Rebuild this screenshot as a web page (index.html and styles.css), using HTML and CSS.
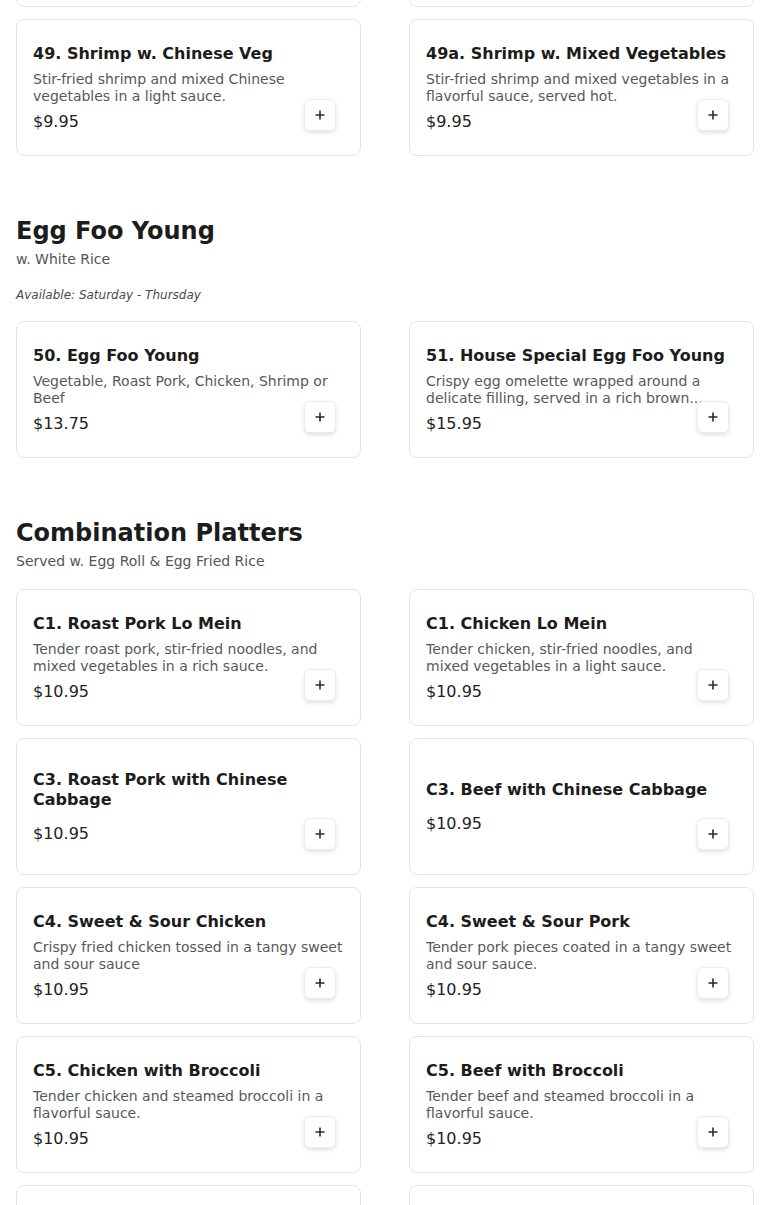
FILE: index.html
```html
<!DOCTYPE html>
<html lang="en">
<head>
<meta charset="utf-8">
<title>Menu</title>
<link rel="stylesheet" href="styles.css">
</head>
<body>
<main class="menu">
  <section class="section section-first">
    <div class="grid">
      <article class="card">
        <div class="info">
          <h3 class="name">48. Shrimp w. Broccoli</h3>
          <p class="desc">Stir-fried shrimp and fresh broccoli in a savory brown sauce.</p>
          <p class="price">$9.95</p>
        </div>
        <button class="add" aria-label="Add"><svg viewBox="0 0 10 10" width="10" height="10"><path d="M5 0.5V9.5M0.5 5H9.5" stroke="#2a2a2a" stroke-width="1.6" fill="none"/></svg></button>
      </article>
      <article class="card">
        <div class="info">
          <h3 class="name">48a. Shrimp w. Garlic Sauce</h3>
          <p class="desc">Stir-fried shrimp with vegetables in a spicy garlic sauce.</p>
          <p class="price">$9.95</p>
        </div>
        <button class="add" aria-label="Add"><svg viewBox="0 0 10 10" width="10" height="10"><path d="M5 0.5V9.5M0.5 5H9.5" stroke="#2a2a2a" stroke-width="1.6" fill="none"/></svg></button>
      </article>
      <article class="card">
        <div class="info">
          <h3 class="name">49. Shrimp w. Chinese Veg</h3>
          <p class="desc">Stir-fried shrimp and mixed Chinese vegetables in a light sauce.</p>
          <p class="price">$9.95</p>
        </div>
        <button class="add" aria-label="Add"><svg viewBox="0 0 10 10" width="10" height="10"><path d="M5 0.5V9.5M0.5 5H9.5" stroke="#2a2a2a" stroke-width="1.6" fill="none"/></svg></button>
      </article>
      <article class="card">
        <div class="info">
          <h3 class="name">49a. Shrimp w. Mixed Vegetables</h3>
          <p class="desc">Stir-fried shrimp and mixed vegetables in a flavorful sauce, served hot.</p>
          <p class="price">$9.95</p>
        </div>
        <button class="add" aria-label="Add"><svg viewBox="0 0 10 10" width="10" height="10"><path d="M5 0.5V9.5M0.5 5H9.5" stroke="#2a2a2a" stroke-width="1.6" fill="none"/></svg></button>
      </article>
    </div>
  </section>

  <section class="section">
    <h2 class="title">Egg Foo Young</h2>
    <p class="sub">w. White Rice</p>
    <p class="avail">Available: Saturday - Thursday</p>
    <div class="grid">
      <article class="card">
        <div class="info">
          <h3 class="name">50. Egg Foo Young</h3>
          <p class="desc">Vegetable, Roast Pork, Chicken, Shrimp or Beef</p>
          <p class="price">$13.75</p>
        </div>
        <button class="add" aria-label="Add"><svg viewBox="0 0 10 10" width="10" height="10"><path d="M5 0.5V9.5M0.5 5H9.5" stroke="#2a2a2a" stroke-width="1.6" fill="none"/></svg></button>
      </article>
      <article class="card">
        <div class="info">
          <h3 class="name">51. House Special Egg Foo Young</h3>
          <p class="desc">Crispy egg omelette wrapped around a delicate filling, served in a rich brown...</p>
          <p class="price">$15.95</p>
        </div>
        <button class="add" aria-label="Add"><svg viewBox="0 0 10 10" width="10" height="10"><path d="M5 0.5V9.5M0.5 5H9.5" stroke="#2a2a2a" stroke-width="1.6" fill="none"/></svg></button>
      </article>
    </div>
  </section>

  <section class="section">
    <h2 class="title">Combination Platters</h2>
    <p class="sub">Served w. Egg Roll &amp; Egg Fried Rice</p>
    <div class="grid">
      <article class="card">
        <div class="info">
          <h3 class="name">C1. Roast Pork Lo Mein</h3>
          <p class="desc">Tender roast pork, stir-fried noodles, and mixed vegetables in a rich sauce.</p>
          <p class="price">$10.95</p>
        </div>
        <button class="add" aria-label="Add"><svg viewBox="0 0 10 10" width="10" height="10"><path d="M5 0.5V9.5M0.5 5H9.5" stroke="#2a2a2a" stroke-width="1.6" fill="none"/></svg></button>
      </article>
      <article class="card">
        <div class="info">
          <h3 class="name">C1. Chicken Lo Mein</h3>
          <p class="desc">Tender chicken, stir-fried noodles, and mixed vegetables in a light sauce.</p>
          <p class="price">$10.95</p>
        </div>
        <button class="add" aria-label="Add"><svg viewBox="0 0 10 10" width="10" height="10"><path d="M5 0.5V9.5M0.5 5H9.5" stroke="#2a2a2a" stroke-width="1.6" fill="none"/></svg></button>
      </article>
      <article class="card">
        <div class="info">
          <h3 class="name">C3. Roast Pork with Chinese Cabbage</h3>
          <p class="price">$10.95</p>
        </div>
        <button class="add" aria-label="Add"><svg viewBox="0 0 10 10" width="10" height="10"><path d="M5 0.5V9.5M0.5 5H9.5" stroke="#2a2a2a" stroke-width="1.6" fill="none"/></svg></button>
      </article>
      <article class="card">
        <div class="info">
          <h3 class="name">C3. Beef with Chinese Cabbage</h3>
          <p class="price">$10.95</p>
        </div>
        <button class="add" aria-label="Add"><svg viewBox="0 0 10 10" width="10" height="10"><path d="M5 0.5V9.5M0.5 5H9.5" stroke="#2a2a2a" stroke-width="1.6" fill="none"/></svg></button>
      </article>
      <article class="card">
        <div class="info">
          <h3 class="name">C4. Sweet &amp; Sour Chicken</h3>
          <p class="desc">Crispy fried chicken tossed in a tangy sweet and sour sauce</p>
          <p class="price">$10.95</p>
        </div>
        <button class="add" aria-label="Add"><svg viewBox="0 0 10 10" width="10" height="10"><path d="M5 0.5V9.5M0.5 5H9.5" stroke="#2a2a2a" stroke-width="1.6" fill="none"/></svg></button>
      </article>
      <article class="card">
        <div class="info">
          <h3 class="name">C4. Sweet &amp; Sour Pork</h3>
          <p class="desc">Tender pork pieces coated in a tangy sweet and sour sauce.</p>
          <p class="price">$10.95</p>
        </div>
        <button class="add" aria-label="Add"><svg viewBox="0 0 10 10" width="10" height="10"><path d="M5 0.5V9.5M0.5 5H9.5" stroke="#2a2a2a" stroke-width="1.6" fill="none"/></svg></button>
      </article>
      <article class="card">
        <div class="info">
          <h3 class="name">C5. Chicken with Broccoli</h3>
          <p class="desc">Tender chicken and steamed broccoli in a flavorful sauce.</p>
          <p class="price">$10.95</p>
        </div>
        <button class="add" aria-label="Add"><svg viewBox="0 0 10 10" width="10" height="10"><path d="M5 0.5V9.5M0.5 5H9.5" stroke="#2a2a2a" stroke-width="1.6" fill="none"/></svg></button>
      </article>
      <article class="card">
        <div class="info">
          <h3 class="name">C5. Beef with Broccoli</h3>
          <p class="desc">Tender beef and steamed broccoli in a flavorful sauce.</p>
          <p class="price">$10.95</p>
        </div>
        <button class="add" aria-label="Add"><svg viewBox="0 0 10 10" width="10" height="10"><path d="M5 0.5V9.5M0.5 5H9.5" stroke="#2a2a2a" stroke-width="1.6" fill="none"/></svg></button>
      </article>
      <article class="card">
        <div class="info">
          <h3 class="name">C6. Chicken Chow Mein</h3>
          <p class="desc">Tender chicken and crunchy vegetables in a light sauce.</p>
          <p class="price">$10.95</p>
        </div>
        <button class="add" aria-label="Add"><svg viewBox="0 0 10 10" width="10" height="10"><path d="M5 0.5V9.5M0.5 5H9.5" stroke="#2a2a2a" stroke-width="1.6" fill="none"/></svg></button>
      </article>
      <article class="card">
        <div class="info">
          <h3 class="name">C6. Pepper Steak</h3>
          <p class="desc">Tender beef with green peppers and onions in a brown sauce.</p>
          <p class="price">$10.95</p>
        </div>
        <button class="add" aria-label="Add"><svg viewBox="0 0 10 10" width="10" height="10"><path d="M5 0.5V9.5M0.5 5H9.5" stroke="#2a2a2a" stroke-width="1.6" fill="none"/></svg></button>
      </article>
    </div>
  </section>
</main>
</body>
</html>
```
FILE: styles.css
```css
* { box-sizing: border-box; }

html, body {
  margin: 0;
  padding: 0;
  background: #ffffff;
  font-family: "DejaVu Sans", "Liberation Sans", sans-serif;
  color: #1c1c1c;
}

.menu {
  padding: 0 16px;
  margin-top: -130px;
  display: flex;
  flex-direction: column;
  gap: 61px;
}

.title {
  margin: 0;
  font-size: 24px;
  line-height: 28px;
  font-weight: bold;
  color: #1c1c1c;
}

.sub {
  margin: 4px 0 0;
  font-size: 14px;
  line-height: 20px;
  color: #555555;
}

.avail {
  margin: 18px 0 0;
  font-size: 12px;
  line-height: 16px;
  font-style: italic;
  color: #4a4a4a;
}

.section .grid {
  margin-top: 18px;
}

.section-first .grid {
  margin-top: 0;
}

.grid {
  display: grid;
  grid-template-columns: 1fr 1fr;
  column-gap: 48px;
  row-gap: 12px;
}

.card {
  position: relative;
  height: 137px;
  border: 1px solid #e4e4e4;
  border-radius: 8px;
  background: #fff;
  padding: 1px 16px 0;
  display: flex;
  align-items: center;
}

.info {
  width: 100%;
  display: flex;
  flex-direction: column;
}

.name {
  margin: 0 0 8px;
  font-size: 16px;
  line-height: 19.2px;
  font-weight: bold;
  color: #1c1c1c;
}

.desc {
  margin: 0;
  font-size: 14px;
  line-height: 17px;
  color: #585858;
  display: -webkit-box;
  -webkit-line-clamp: 2;
  -webkit-box-orient: vertical;
  overflow: hidden;
}

.price {
  margin: 7px 0 0;
  font-size: 16px;
  line-height: 20px;
  color: #222222;
}

.add {
  position: absolute;
  right: 24px;
  bottom: 24px;
  width: 32px;
  height: 32px;
  padding: 0;
  border: 1px solid #ececec;
  border-radius: 6px;
  background: #fff;
  box-shadow: 0 2px 4px rgba(0, 0, 0, 0.12);
  display: flex;
  align-items: center;
  justify-content: center;
  cursor: pointer;
}

.add svg {
  display: block;
}
```
